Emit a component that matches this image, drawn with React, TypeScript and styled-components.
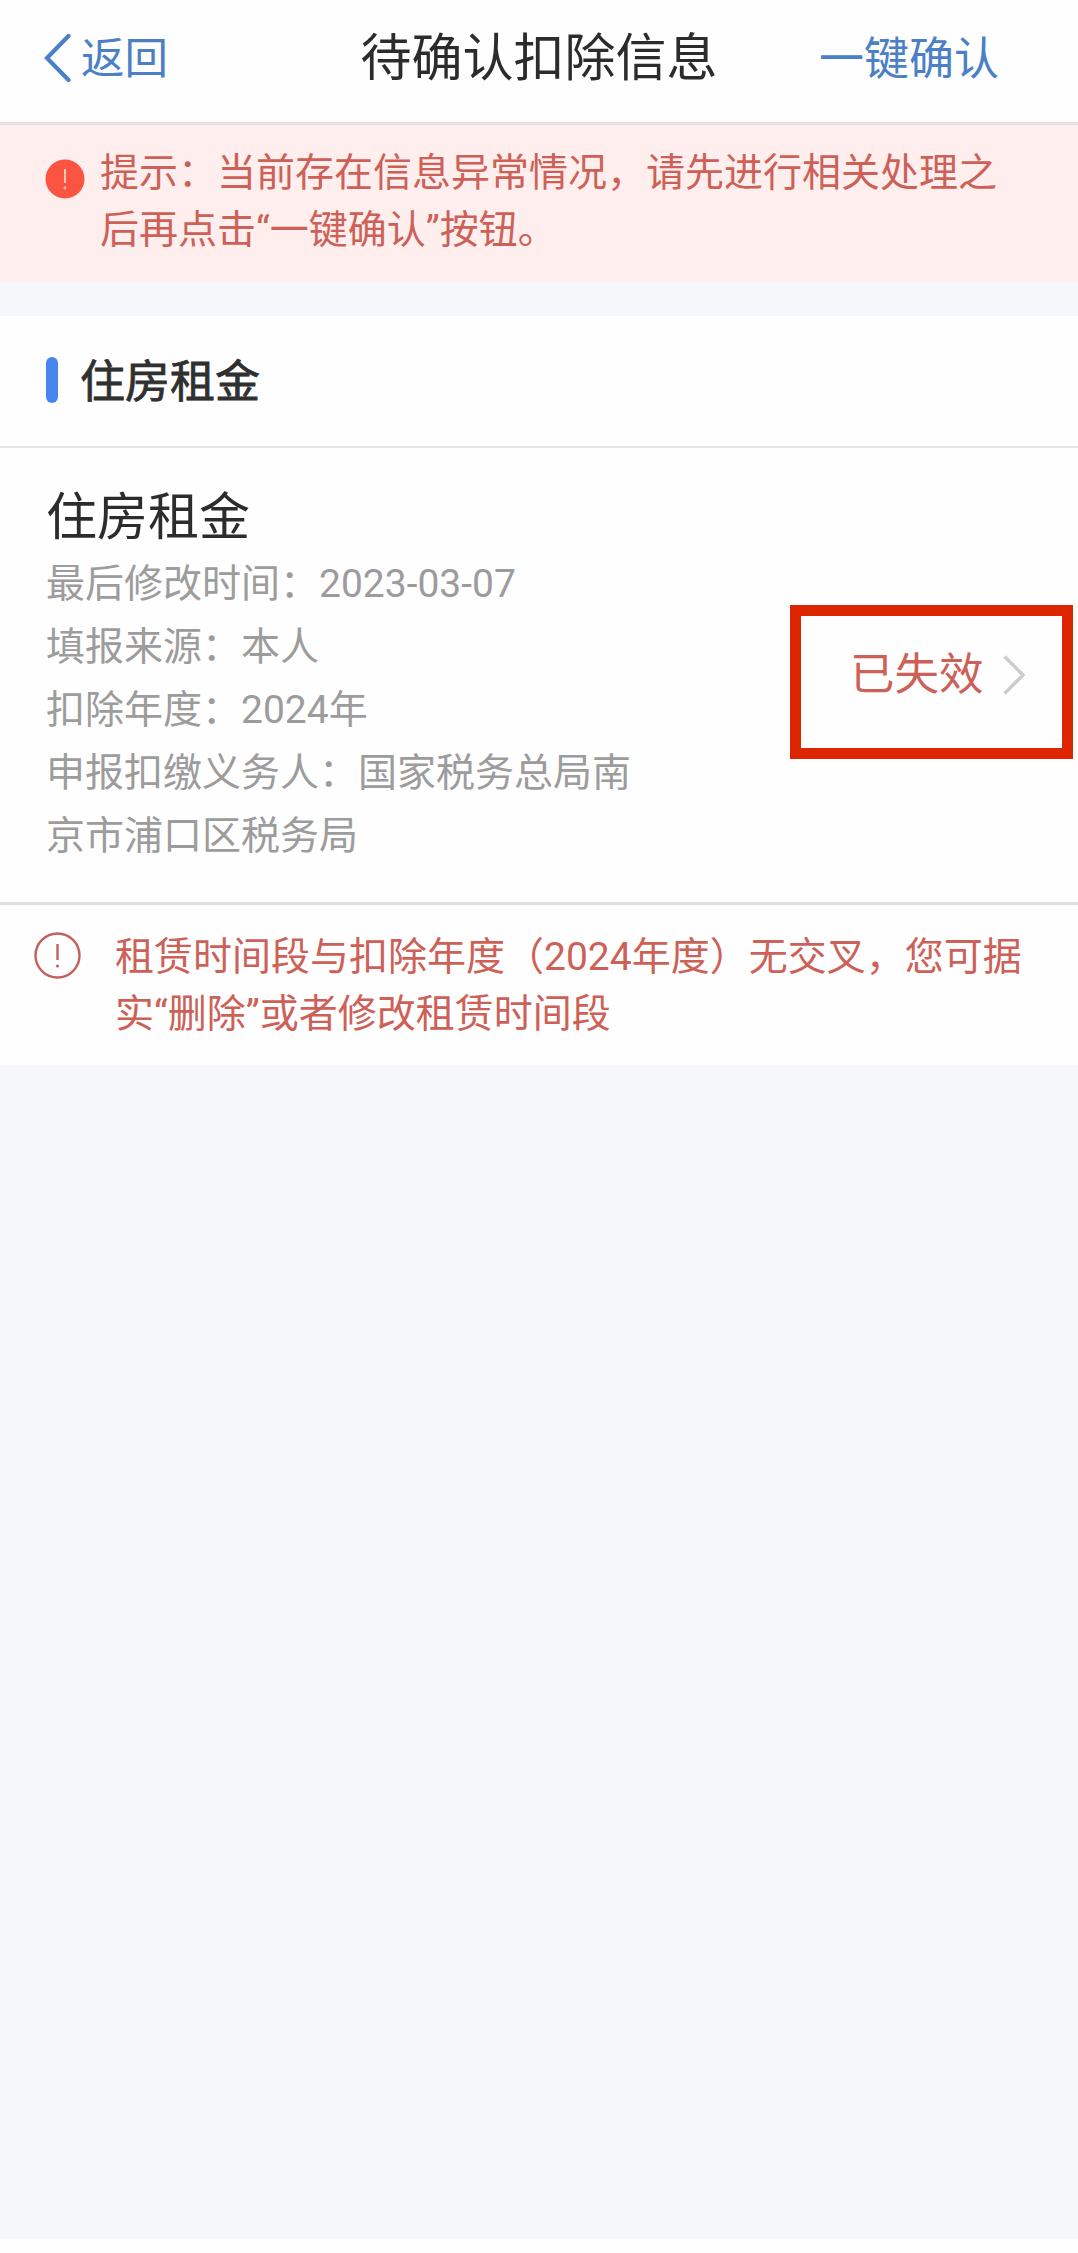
import React from "react";
import styled, { createGlobalStyle } from "styled-components";

const GlobalStyle = createGlobalStyle`
  *, *::before, *::after { box-sizing: border-box; }
  body {
    margin: 0;
    background: #fefefe;
    font-family: Roboto, "Noto Sans CJK SC", sans-serif;
  }
`;

const Screen = styled.div`
  display: flex;
  flex-direction: column;
  width: 1078px;
  height: 2239px;
  background: #f5f7fb;
`;

const NavBar = styled.header`
  display: grid;
  grid-template-columns: 1fr auto 1fr;
  align-items: center;
  height: 125px;
  padding: 0 79px 4px 44px;
  background: #fefefe;
  border-bottom: 3px solid #e8e0e5;
`;

const NavButton = styled.button<{ $align: "start" | "end"; $size: number }>`
  display: flex;
  align-items: center;
  justify-self: ${(p) => p.$align};
  gap: 10px;
  padding: 2px 0 0;
  border: 0;
  background: none;
  color: #4b80c6;
  font: inherit;
  font-size: ${(p) => p.$size}px;
  line-height: 60px;
  white-space: nowrap;
`;

const BackIcon = styled.svg`
  flex: none;
  margin-top: -4px;
`;

const PageTitle = styled.h1`
  margin: 0 0 0 35px;
  color: #2c2c2c;
  font-size: 51px;
  font-weight: 400;
  line-height: 70px;
  white-space: nowrap;
`;

const Notice = styled.section`
  display: flex;
  align-items: flex-start;
  gap: 15px;
  height: 158px;
  padding: 20px 40px 0 45px;
  background: #feeeed;
`;

const NoticeIcon = styled.svg`
  flex: none;
  margin-top: 14px;
`;

const Message = styled.p`
  margin: 0;
  color: #cd6157;
  font-size: 39px;
  line-height: 57px;
  white-space: nowrap;
`;

const Panel = styled.main`
  margin-top: 33px;
  background: #fefefe;
`;

const SectionHeader = styled.div`
  display: flex;
  align-items: center;
  gap: 22px;
  height: 132px;
  padding: 0 46px 3px;
  border-bottom: 2px solid #e4e4e4;
`;

const Marker = styled.span`
  width: 12px;
  height: 46px;
  border-radius: 6px;
  background: #4685ee;
`;

const SectionTitle = styled.h2`
  margin: 7px 0 0;
  color: #303030;
  font-size: 45px;
  font-weight: 400;
  line-height: 60px;
  -webkit-text-stroke: 0.8px #303030;
`;

const Record = styled.article`
  display: flex;
  justify-content: space-between;
  align-items: flex-start;
  height: 457px;
  padding: 35px 5px 0 46px;
  border-bottom: 3px solid #e0e0e0;
`;

const RecordBody = styled.div`
  width: 600px;
`;

const RecordTitle = styled.h3`
  margin: 0;
  color: #2c2c2c;
  font-size: 51px;
  font-weight: 400;
  line-height: 70px;
`;

const Field = styled.p`
  margin: 0;
  color: #9c9c9c;
  font-size: 39px;
  line-height: 63px;
`;

const Status = styled.div`
  display: flex;
  align-items: center;
  gap: 19px;
  width: 283px;
  height: 154px;
  margin-top: 122px;
  padding: 0 0 14px 49px;
  border: 11px solid #dd2500;
  color: #cd6157;
  font-size: 44.5px;
  line-height: 60px;
`;

const Alert = styled.section`
  display: flex;
  align-items: flex-start;
  gap: 34px;
  height: 160px;
  padding: 24px 40px 0 34px;
`;

const AlertIcon = styled.svg`
  flex: none;
  margin-top: 3px;
`;

const fields = [
  "最后修改时间：2023-03-07",
  "填报来源：本人",
  "扣除年度：2024年",
  "申报扣缴义务人：国家税务总局南京市浦口区税务局",
];

export default function App() {
  return (
    <>
      <GlobalStyle />
      <Screen>
        <NavBar>
          <NavButton $align="start" $size={43.5}>
            <BackIcon width="27" height="48" viewBox="0 0 27 48" fill="none">
              <path d="M24.5 2 L3 24 L24.5 46" stroke="#4b80c6" strokeWidth="4.2" strokeLinecap="round" />
            </BackIcon>
            返回
          </NavButton>
          <PageTitle>待确认扣除信息</PageTitle>
          <NavButton $align="end" $size={45}>一键确认</NavButton>
        </NavBar>
        <Notice>
          <NoticeIcon width="40" height="40" viewBox="0 0 40 40">
            <circle cx="20" cy="20" r="19.5" fill="#fb5441" />
            <path d="M20 10 V24" stroke="#fec4b8" strokeWidth="2" />
            <circle cx="20" cy="29" r="1.4" fill="#fec4b8" />
          </NoticeIcon>
          <Message>
            提示：当前存在信息异常情况，请先进行相关处理之
            <br />
            后再点击“一键确认”按钮。
          </Message>
        </Notice>
        <Panel>
          <SectionHeader>
            <Marker />
            <SectionTitle>住房租金</SectionTitle>
          </SectionHeader>
          <Record>
            <RecordBody>
              <RecordTitle>住房租金</RecordTitle>
              {fields.map((f) => (
                <Field key={f}>{f}</Field>
              ))}
            </RecordBody>
            <Status>
              已失效
              <svg width="23" height="40" viewBox="0 0 23 40" fill="none">
                <path d="M1.5 1.5 L20 20 L1.5 38.5" stroke="#cccccc" strokeWidth="3.4" />
              </svg>
            </Status>
          </Record>
          <Alert>
            <AlertIcon width="47" height="47" viewBox="0 0 47 47" fill="none">
              <circle cx="23.5" cy="23.5" r="22" stroke="#c4615b" strokeWidth="2.4" />
              <path d="M23.5 12 V28" stroke="#c4615b" strokeWidth="2.4" />
              <circle cx="23.5" cy="34" r="1.6" fill="#c4615b" />
            </AlertIcon>
            <Message>
              租赁时间段与扣除年度（2024年度）无交叉，您可据
              <br />
              实“删除”或者修改租赁时间段
            </Message>
          </Alert>
        </Panel>
      </Screen>
    </>
  );
}
